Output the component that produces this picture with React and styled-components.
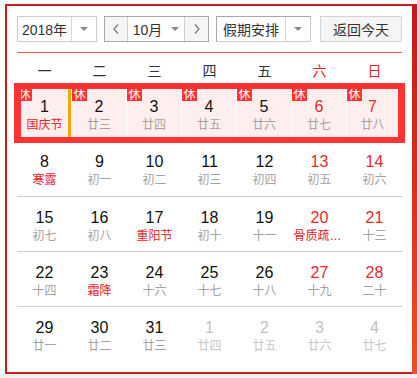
import React from 'react'
import styled, { createGlobalStyle } from 'styled-components';

const GlobalStyle = createGlobalStyle`
  body {
    margin: 0;
    background: #fff;
    font-family: 'Liberation Sans', 'Noto Sans CJK SC', sans-serif;
  }
`;

const Shell = styled.div`
  display: flex;
  margin: 4px 0 0 5px;
  width: 412px;
`;

const Panel = styled.div`
  flex: 1;
  border: 2px solid #cc1b1b;
  border-right: none;
  padding: 10px 10px 11px 10px;
`;

const Edge = styled.div`
  width: 5px;
  background: linear-gradient(180deg, #c8161a 0%, #dc2e1d 50%, #f04e24 100%);
`;

const Floor = styled.div`
  height: 4px;
  background: #f1f1f1;
`;

const Toolbar = styled.div`
  display: flex;
  align-items: stretch;
  height: 26px;
  font-size: 14px;
  color: #333;
`;

const Select = styled.div`
  display: flex;
  width: ${p => p.w}px;
  margin-right: ${p => p.gap}px;
  border: 1px solid ${p => p.dark ? '#a9a9a9' : '#cccccc'};
  border-right-color: #cccccc;
  border-bottom-color: #cccccc;
  box-sizing: border-box;
  background: #fff;
`;

const SelectText = styled.div`
  flex: 1;
  display: flex;
  align-items: center;
  justify-content: center;
  border-right: 1px solid #d6d6d6;
`;

const Caret = styled.div`
  width: 24px;
  display: flex;
  align-items: center;
  justify-content: center;
  &::after {
    content: '';
    border-left: 4px solid transparent;
    border-right: 4px solid transparent;
    border-top: 4px solid #8a8a8a;
  }
`;

const MonthGroup = styled.div`
  display: flex;
  width: 105px;
  margin-right: 7px;
  border: 1px solid #a9a9a9;
  box-sizing: border-box;
`;

const ArrowBtn = styled.div`
  width: ${p => p.w}px;
  display: flex;
  align-items: center;
  justify-content: center;
  background: #f6f6f6;
  border-left: ${p => p.side === 'right' ? '1px solid #cfcfcf' : 'none'};
  border-right: ${p => p.side === 'left' ? '1px solid #cfcfcf' : 'none'};
`;

const MonthText = styled.div`
  flex: 1;
  display: flex;
  align-items: center;
  justify-content: center;
  gap: 9px;
  &::after {
    content: '';
    border-left: 4px solid transparent;
    border-right: 4px solid transparent;
    border-top: 4px solid #8a8a8a;
  }
`;

const TodayBtn = styled.div`
  width: 82px;
  display: flex;
  align-items: center;
  justify-content: center;
  background: #f5f5f5;
  border: 1px solid #d4d4d4;
  box-sizing: border-box;
  margin-left: auto;
`;

const Divider = styled.div`
  height: 1px;
  background: #f2584a;
  margin-top: 10px;
`;

const Grid = styled.div`
  display: grid;
  grid-template-columns: repeat(7, 55px);
`;

const HeadRow = styled(Grid)`
  height: 33px;
  align-items: center;
  font-size: 14px;
`;

const HeadCell = styled.div`
  text-align: center;
  color: ${p => p.red ? '#e62424' : '#333'};
  padding-top: 1px;
`;

const WeekRow = styled(Grid)`
  height: 55px;
  box-sizing: border-box;
  border-top: ${p => p.line ? '1px solid #cdcdcd' : 'none'};
`;

const HolidayRow = styled.div`
  display: grid;
  grid-template-columns: 51px repeat(5, 55px) 51px;
  margin: -3px -3px -2px -3px;
  border: 7px solid #ff3333;
  border-top-width: 6px;
  border-bottom-width: 6px;
  height: 48px;
  position: relative;
  z-index: 1;
`;

const Cell = styled.div`
  display: flex;
  flex-direction: column;
  align-items: center;
  padding-top: ${p => p.holiday ? 8 : 11}px;
  box-sizing: border-box;
  position: relative;
  overflow: hidden;
  background: ${p => p.holiday ? '#ffeeee' : 'transparent'};
  border-right: ${p => p.holiday && !p.last ? '1px solid #fff' : 'none'};
  box-shadow: ${p => p.today ? 'inset -3px 0 0 #f5a700' : 'none'};
  padding-right: ${p => p.today ? 3 : 0}px;
`;

const DayNum = styled.div`
  font-size: 16px;
  line-height: 20px;
  color: ${p => p.other ? '#c2c2c2' : p.red ? '#e62a2a' : '#111'};
`;

const Lunar = styled.div`
  font-size: 12px;
  line-height: 16px;
  width: 52px;
  text-align: center;
  white-space: nowrap;
  overflow: hidden;
  text-overflow: ellipsis;
  color: ${p => p.fest ? '#e4232b' : p.other ? '#c8c8c8' : '#a3a3a3'};
`;

const Badge = styled.span`
  position: absolute;
  top: 0;
  left: ${p => p.cut ? -4 : 0}px;
  width: 15px;
  height: 12px;
  line-height: 12px;
  font-size: 12px;
  text-align: center;
  color: #fff;
  background: #ff3333;
`;

const Chevron = ({ dir }) => (
  <svg width="6" height="10" viewBox="0 0 6 10">
    <polyline
      points={dir === 'left' ? '5,0.5 1,5 5,9.5' : '1,0.5 5,5 1,9.5'}
      fill="none"
      stroke="#777"
      strokeWidth="1.2"
    />
  </svg>
);

const weekdays = ['一', '二', '三', '四', '五', '六', '日'];

const holidayWeek = [
  ['1', '国庆节', true], ['2', '廿三'], ['3', '廿四'], ['4', '廿五'],
  ['5', '廿六'], ['6', '廿七'], ['7', '廿八'],
];

const weeks = [
  [['8', '寒露', true], ['9', '初一'], ['10', '初二'], ['11', '初三'], ['12', '初四'], ['13', '初五'], ['14', '初六']],
  [['15', '初七'], ['16', '初八'], ['17', '重阳节', true], ['18', '初十'], ['19', '十一'], ['20', '骨质疏松日', true], ['21', '十三']],
  [['22', '十四'], ['23', '霜降', true], ['24', '十六'], ['25', '十七'], ['26', '十八'], ['27', '十九'], ['28', '二十']],
  [['29', '廿一'], ['30', '廿二'], ['31', '廿三'], ['1', '廿四', false, true], ['2', '廿五', false, true], ['3', '廿六', false, true], ['4', '廿七', false, true]],
];

const Calendar = () => {
  return (
    <>
      <Shell>
        <Panel>
          <Toolbar>
            <Select w={80} gap={7}>
              <SelectText>2018年</SelectText>
              <Caret />
            </Select>
            <MonthGroup>
              <ArrowBtn w={22} side="left"><Chevron dir="left" /></ArrowBtn>
              <MonthText>10月</MonthText>
              <ArrowBtn w={23} side="right"><Chevron dir="right" /></ArrowBtn>
            </MonthGroup>
            <Select w={95} gap={0} dark>
              <SelectText>假期安排</SelectText>
              <Caret />
            </Select>
            <TodayBtn>返回今天</TodayBtn>
          </Toolbar>
          <Divider />
          <HeadRow>
            {weekdays.map((d, i) => (
              <HeadCell key={d} red={i > 4}>{d}</HeadCell>
            ))}
          </HeadRow>
          <HolidayRow>
            {holidayWeek.map(([n, l, fest], i) => (
              <Cell key={i} holiday today={i === 0} last={i === 6}>
                <Badge cut={i === 0}>休</Badge>
                <DayNum red={i > 4}>{n}</DayNum>
                <Lunar fest={fest}>{l}</Lunar>
              </Cell>
            ))}
          </HolidayRow>
          {weeks.map((week, w) => (
            <WeekRow key={w} line={w > 0}>
              {week.map(([n, l, fest, other], i) => (
                <Cell key={i}>
                  <DayNum red={i > 4} other={other}>{n}</DayNum>
                  <Lunar fest={fest} other={other}>{l}</Lunar>
                </Cell>
              ))}
            </WeekRow>
          ))}
        </Panel>
        <Edge />
      </Shell>
      <Floor />
    </>
  );
}

export default function App() {
  return (
    <>
      <GlobalStyle />
      <Calendar />
    </>
  );
}
